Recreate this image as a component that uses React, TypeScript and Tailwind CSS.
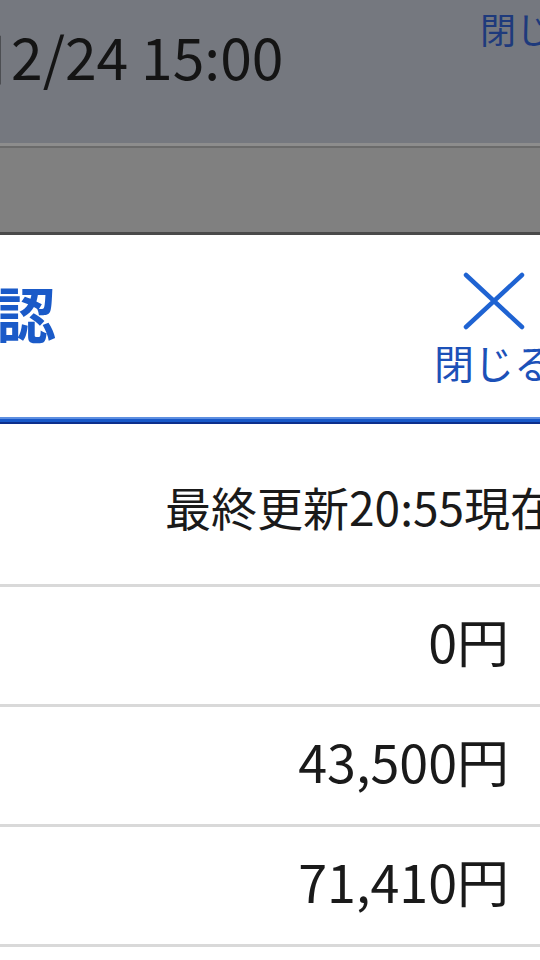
const rows = ["0円", "43,500円", "71,410円"];

const App = () => {
  return (
    <div className="w-[540px] h-[960px] overflow-hidden bg-white font-['Noto_Sans_CJK_JP',sans-serif]">
      {/* page is wider than the screen, left and right edges cut */}
      <div className="w-[700px] -ml-[100px]">
        {/* dimmed page behind the sheet */}
        <div className="h-[143px] bg-[#75787f] flex justify-between">
          <div className="flex flex-col">
            <p className="h-[3px] overflow-hidden text-[#1a1a1a] text-[34px] leading-[8px] pl-[106px] tracking-[14px]">
              ...
            </p>
            <div className="flex items-center mt-[20px] -ml-[4px] text-[#141414] whitespace-nowrap">
              <span className="text-[57px] leading-[64px] mr-[1px]">期日</span>
              <span className="text-[57px] leading-[64px]">2/24 15:00</span>
            </div>
          </div>
          <span className="text-[36px] leading-[40px] mt-[8px] mr-[12px] text-[#1e3a7c] whitespace-nowrap">
            閉じる
          </span>
        </div>
        <div className="h-[3px] bg-[#8d8d8d]" />
        <div className="h-[2px] bg-[#6b6b6b]" />
        <div className="h-[84px] bg-[#808080]" />
        <div className="h-[3px] bg-[#4a4a4a]" />

        {/* sheet */}
        <div className="bg-white">
          <div className="h-[182px] flex items-center justify-between">
            <h1 className="text-[60px] font-bold text-[#1a5ac8] pl-[36px] whitespace-nowrap leading-none -mt-[28px]">
              確認
            </h1>
            <button className="flex flex-col items-center mr-[46px] mt-[4px] text-[#1c51b8]">
              <svg width="62" height="58" viewBox="0 0 62 58" className="text-[#1f63d2]">
                <path
                  d="M3 3 L59 55 M59 3 L3 55"
                  stroke="currentColor"
                  strokeWidth="4.5"
                  strokeLinecap="round"
                  fill="none"
                />
              </svg>
              <span className="text-[40px] leading-[44px] mt-[10px] whitespace-nowrap">閉じる</span>
            </button>
          </div>
          <div className="h-[2px] bg-[#5e8fe0]" />
          <div className="h-[3px] bg-[#1858c9]" />
          <div className="h-[2px] bg-[#0d2f8c]" />

          <div className="h-[163px] flex items-center justify-end pr-[44px] border-b-[3px] border-[#d9d9d9]">
            <span className="text-[46px] text-[#1a1a1a] whitespace-nowrap mt-[4px]">最終更新20:55現在</span>
          </div>
          {rows.map((v) => (
            <div
              key={v}
              className="h-[120px] flex items-center justify-end pr-[91px] border-b-[3px] border-[#d9d9d9]"
            >
              <span className="text-[52px] text-[#1a1a1a] whitespace-nowrap -mt-[9px]">{v}</span>
            </div>
          ))}
        </div>
      </div>
    </div>
  );
};

export default App;
